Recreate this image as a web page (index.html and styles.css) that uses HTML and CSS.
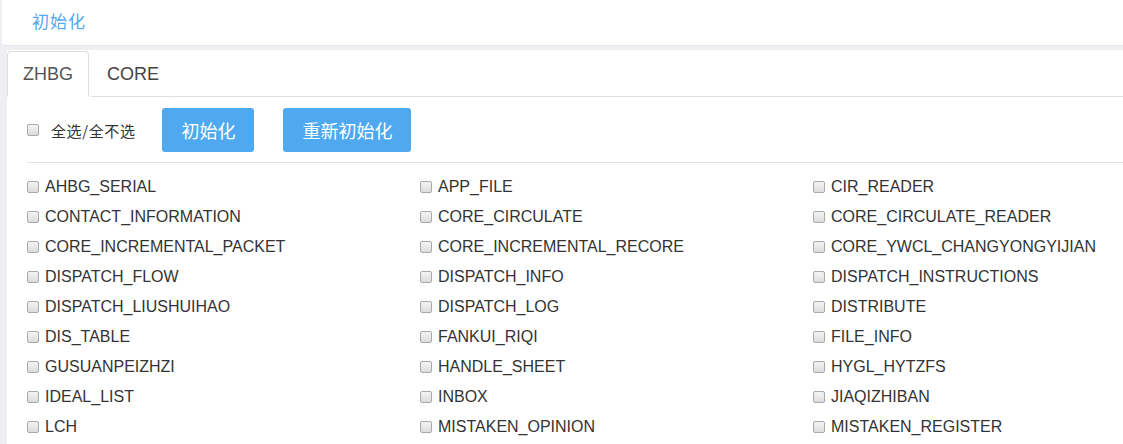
FILE: index.html
```html
<!DOCTYPE html>
<html lang="zh">
<head>
<meta charset="utf-8">
<title>初始化</title>
<link rel="stylesheet" href="styles.css">
</head>
<body>
<div class="page">
  <header class="topbar">
    <a class="toplink" href="#">初始化</a>
  </header>
  <main class="panel">
    <nav class="tabs">
      <div class="tab active">ZHBG</div>
      <div class="tab">CORE</div>
      <div class="tab-rest"></div>
    </nav>
    <section class="content">
      <div class="actions">
        <label class="check-all"><span class="box"></span><span class="cjk">全选/全不选</span></label>
        <button class="btn">初始化</button>
        <button class="btn">重新初始化</button>
      </div>
      <div class="grid">
        <label class="item"><span class="box"></span>AHBG_SERIAL</label>
        <label class="item"><span class="box"></span>APP_FILE</label>
        <label class="item"><span class="box"></span>CIR_READER</label>
        <label class="item"><span class="box"></span>CONTACT_INFORMATION</label>
        <label class="item"><span class="box"></span>CORE_CIRCULATE</label>
        <label class="item"><span class="box"></span>CORE_CIRCULATE_READER</label>
        <label class="item"><span class="box"></span>CORE_INCREMENTAL_PACKET</label>
        <label class="item"><span class="box"></span>CORE_INCREMENTAL_RECORE</label>
        <label class="item"><span class="box"></span>CORE_YWCL_CHANGYONGYIJIAN</label>
        <label class="item"><span class="box"></span>DISPATCH_FLOW</label>
        <label class="item"><span class="box"></span>DISPATCH_INFO</label>
        <label class="item"><span class="box"></span>DISPATCH_INSTRUCTIONS</label>
        <label class="item"><span class="box"></span>DISPATCH_LIUSHUIHAO</label>
        <label class="item"><span class="box"></span>DISPATCH_LOG</label>
        <label class="item"><span class="box"></span>DISTRIBUTE</label>
        <label class="item"><span class="box"></span>DIS_TABLE</label>
        <label class="item"><span class="box"></span>FANKUI_RIQI</label>
        <label class="item"><span class="box"></span>FILE_INFO</label>
        <label class="item"><span class="box"></span>GUSUANPEIZHZI</label>
        <label class="item"><span class="box"></span>HANDLE_SHEET</label>
        <label class="item"><span class="box"></span>HYGL_HYTZFS</label>
        <label class="item"><span class="box"></span>IDEAL_LIST</label>
        <label class="item"><span class="box"></span>INBOX</label>
        <label class="item"><span class="box"></span>JIAQIZHIBAN</label>
        <label class="item"><span class="box"></span>LCH</label>
        <label class="item"><span class="box"></span>MISTAKEN_OPINION</label>
        <label class="item"><span class="box"></span>MISTAKEN_REGISTER</label>
      </div>
    </section>
  </main>
</div>
</body>
</html>
```
FILE: styles.css
```css
html, body {
  margin: 0;
  padding: 0;
  height: 100%;
  overflow: hidden;
}
body {
  background: #efeff3;
  font-family: "Liberation Sans", "Noto Sans CJK SC", sans-serif;
  color: #333;
}
.page {
  display: flex;
  flex-direction: column;
  min-height: 100%;
}
.topbar {
  height: 46px;
  background: #fff;
  margin-left: 2px;
  display: flex;
  align-items: center;
  padding-left: 30px;
  border-bottom: 1px solid #e6e6ea;
  box-sizing: border-box;
}
.toplink {
  font-family: "Noto Sans CJK SC", sans-serif;
  font-size: 17px;
  color: #55a7ef;
  text-decoration: none;
  letter-spacing: 1px;
  margin-top: -4px;
}
.panel {
  flex: 1;
  margin-top: 4px;
  margin-left: 7px;
  background: #fff;
  padding-top: 1px;
  min-width: 0;
}
.tabs {
  display: flex;
  align-items: flex-end;
  height: 46px;
}
.tab {
  height: 46px;
  box-sizing: border-box;
  padding: 0 15px;
  margin-right: 2px;
  border: 1px solid transparent;
  border-bottom: 1px solid #ddd;
  border-radius: 4px 4px 0 0;
  font-size: 18px;
  line-height: 44px;
  color: #444;
}
.tab.active {
  border-color: #ddd;
  border-bottom-color: #fff;
  color: #555;
}
.tab-rest {
  flex: 1;
  height: 46px;
  box-sizing: border-box;
  border-bottom: 1px solid #ddd;
  margin-left: -2px;
}
.content {
  padding-left: 20px;
}
.actions {
  display: flex;
  align-items: center;
  padding: 11px 0 10px;
  border-bottom: 1px solid #e3e3e3;
}
.check-all {
  display: flex;
  align-items: center;
  font-size: 16px;
  margin-right: 27px;
}
.check-all .box {
  margin-right: 12px;
}
.cjk {
  font-family: "Noto Sans CJK SC", sans-serif;
  font-size: 15px;
  letter-spacing: 0.6px;
  color: #333;
}
.box {
  display: inline-block;
  width: 10px;
  height: 10px;
  border: 1px solid #a9a9a9;
  border-radius: 2px;
  background: linear-gradient(#f4f4f4, #dcdcdc);
  flex: none;
}
.btn {
  height: 44px;
  padding: 0 19px;
  margin-right: 29px;
  border: none;
  border-radius: 3px;
  background: #4ea9f1;
  color: #fff;
  font-family: "Noto Sans CJK SC", sans-serif;
  font-size: 18px;
  cursor: pointer;
}
.grid {
  display: grid;
  grid-template-columns: 393px 393px 1fr;
  padding-top: 9px;
}
.item {
  display: flex;
  align-items: center;
  height: 30px;
  font-size: 16px;
  color: #333;
  white-space: nowrap;
}
.item .box {
  margin-right: 6px;
}
```
